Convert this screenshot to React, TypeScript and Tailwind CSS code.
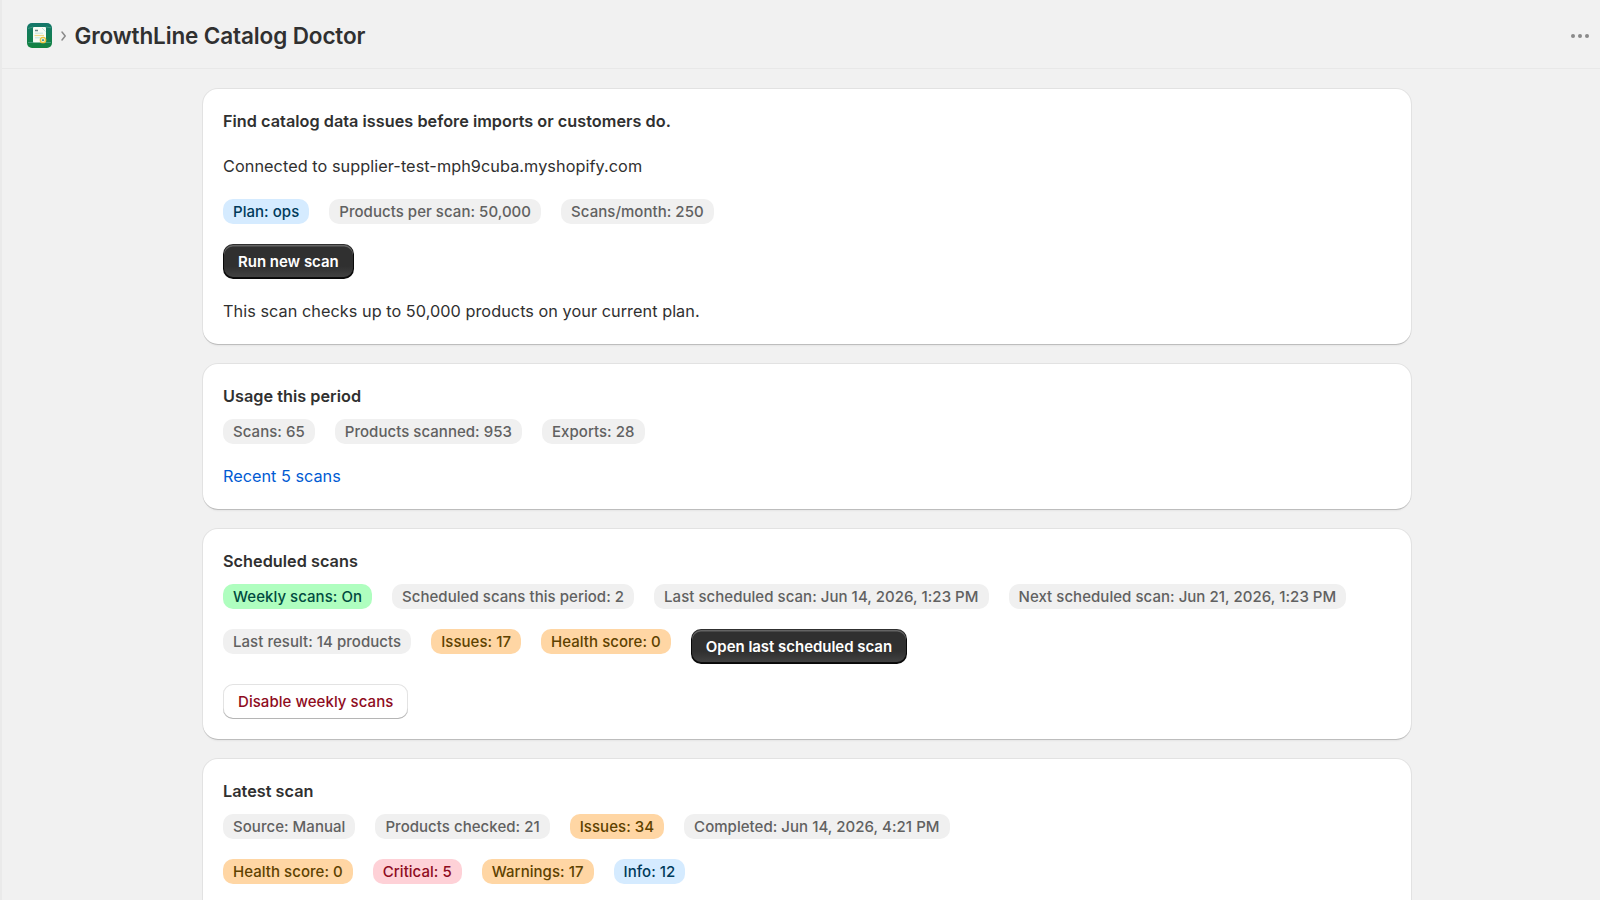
import type { ReactNode } from 'react';

type Tone = 'neutral' | 'info' | 'success' | 'warning' | 'critical';

const BADGE_TONES: Record<Tone, string> = {
  neutral: 'bg-[#f0f0f0] text-[#616161]',
  info: 'bg-[#d5ebff] text-[#003a5a]',
  success: 'bg-[#affebf] text-[#014b40]',
  warning: 'bg-[#ffd6a4] text-[#5e4200]',
  critical: 'bg-[#fed1d7] text-[#8e0b21]',
};

function Badge({ tone = 'neutral', children }: { tone?: Tone; children: ReactNode }) {
  return (
    <span
      className={`inline-flex h-[25px] items-center whitespace-nowrap rounded-[10px] px-2.5 text-[15px] leading-5 font-[550] tracking-[0.04px] ${BADGE_TONES[tone]}`}
    >
      {children}
    </span>
  );
}

function PrimaryButton({ children }: { children: ReactNode }) {
  return (
    <button className="h-[35px] whitespace-nowrap rounded-[10px] bg-[#303030] bg-linear-to-b from-[#303030] from-64% to-[#454545] px-[15px] text-[15px] leading-5 font-semibold tracking-[-0.03px] text-white shadow-[inset_0_-1px_0_1px_rgba(0,0,0,0.8),inset_0_0_0_1px_#303030,inset_0_1.5px_0_1px_rgba(255,255,255,0.25)]">
      {children}
    </button>
  );
}

function Card({ title, children }: { title?: string; children: ReactNode }) {
  return (
    <section className="rounded-[15px] bg-white p-5 shadow-[0_0_0_1px_rgba(0,0,0,0.06),0_1px_0_0_rgba(0,0,0,0.12),0_4px_2px_-2px_rgba(26,26,26,0.05)]">
      {title && <h2 className="mb-2.5 font-semibold tracking-[0.02px]">{title}</h2>}
      <div className="flex flex-col items-start gap-5">{children}</div>
    </section>
  );
}

function Row({ children }: { children: ReactNode }) {
  return <div className="flex items-start gap-5">{children}</div>;
}

function AppIcon() {
  return (
    <svg width="25" height="25" viewBox="0 0 25 25">
      <defs>
        <linearGradient id="tile" x1="0" y1="0" x2="0" y2="1">
          <stop offset="0" stopColor="#14776b" />
          <stop offset="1" stopColor="#12833f" />
        </linearGradient>
      </defs>
      <rect width="25" height="25" rx="5" fill="url(#tile)" />
      <path d="M1 5.5l5-1.5M19 4l5 0.8M1 19.5h6M19 19.5h5" stroke="#4fa68c" strokeWidth="0.7" />
      <rect x="6" y="4" width="13" height="15.5" rx="1" fill="#f8fcf5" />
      <path d="M8 7.5h3" stroke="#6d8587" strokeWidth="1.5" />
      <path d="M15 5l3.5 3.5M8 10.2h8M8 14.8h5" stroke="#c3e5dc" />
      <path d="M7.5 12.5h9.5" stroke="#efd98a" strokeWidth="1.2" />
      <circle cx="16" cy="17" r="2.7" fill="#e6f2df" stroke="#edc53d" strokeWidth="1.3" />
      <path d="M14.7 17.8l1.3-2 1.3 2z" fill="#197b62" />
    </svg>
  );
}

function Header() {
  return (
    <header className="flex h-[69px] items-center border-b border-[#e8e8e8] pt-[3px] pr-[10px] pl-[25px]">
      <AppIcon />
      <svg className="ml-[8px]" width="8" height="12" viewBox="0 0 8 12" fill="none">
        <path d="M2 2l3.2 4L2 10" stroke="#8a8a8a" strokeWidth="1.5" strokeLinecap="round" strokeLinejoin="round" />
      </svg>
      <h1 className="ml-[6.5px] text-[22.5px] leading-[30px] font-semibold tracking-[-0.12px] text-[#303030]">
        GrowthLine Catalog Doctor
      </h1>
      <svg className="ml-auto" width="20" height="6" viewBox="0 0 20 6" fill="#8a8a8a">
        <circle cx="3" cy="3" r="2" />
        <circle cx="10" cy="3" r="2" />
        <circle cx="17" cy="3" r="2" />
      </svg>
    </header>
  );
}

export default function App() {
  return (
    <div className="h-screen overflow-hidden border-l-2 border-[#eaeaea] bg-[#f1f1f1] font-['Inter',sans-serif] text-[16.25px] leading-[25px] text-[#303030]">
      <Header />
      <main className="ml-[201px] flex w-[1208px] flex-col gap-5 pt-5">
        <Card>
          <h2 className="font-semibold tracking-[0.02px]">Find catalog data issues before imports or customers do.</h2>
          <p className="tracking-[0.06px]">Connected to supplier-test-mph9cuba.myshopify.com</p>
          <Row>
            <Badge tone="info">Plan: ops</Badge>
            <Badge>Products per scan: 50,000</Badge>
            <Badge>Scans/month: 250</Badge>
          </Row>
          <PrimaryButton>Run new scan</PrimaryButton>
          <p className="tracking-[0.045px]">This scan checks up to 50,000 products on your current plan.</p>
        </Card>

        <Card title="Usage this period">
          <Row>
            <Badge>Scans: 65</Badge>
            <Badge>Products scanned: 953</Badge>
            <Badge>Exports: 28</Badge>
          </Row>
          <a href="#" className="text-[#005bd3]">Recent 5 scans</a>
        </Card>

        <Card title="Scheduled scans">
          <Row>
            <Badge tone="success">Weekly scans: On</Badge>
            <Badge>Scheduled scans this period: 2</Badge>
            <Badge>Last scheduled scan: Jun 14, 2026, 1:23 PM</Badge>
            <Badge>Next scheduled scan: Jun 21, 2026, 1:23 PM</Badge>
          </Row>
          <Row>
            <Badge>Last result: 14 products</Badge>
            <Badge tone="warning">Issues: 17</Badge>
            <Badge tone="warning">Health score: 0</Badge>
            <PrimaryButton>Open last scheduled scan</PrimaryButton>
          </Row>
          <button className="h-[35px] rounded-[10px] bg-white px-[15px] text-[15px] leading-5 font-[550] tracking-[0.055px] text-[#8e0b21] shadow-[inset_0_-1px_0_0_#b5b5b5,inset_0_0_0_1px_#e3e3e3]">
            Disable weekly scans
          </button>
        </Card>

        <Card title="Latest scan">
          <Row>
            <Badge>Source: Manual</Badge>
            <Badge>Products checked: 21</Badge>
            <Badge tone="warning">Issues: 34</Badge>
            <Badge>Completed: Jun 14, 2026, 4:21 PM</Badge>
          </Row>
          <Row>
            <Badge tone="warning">Health score: 0</Badge>
            <Badge tone="critical">Critical: 5</Badge>
            <Badge tone="warning">Warnings: 17</Badge>
            <Badge tone="info">Info: 12</Badge>
          </Row>
          {/* actions row, below the fold */}
          <div className="h-[35px]" />
        </Card>
      </main>
    </div>
  );
}
